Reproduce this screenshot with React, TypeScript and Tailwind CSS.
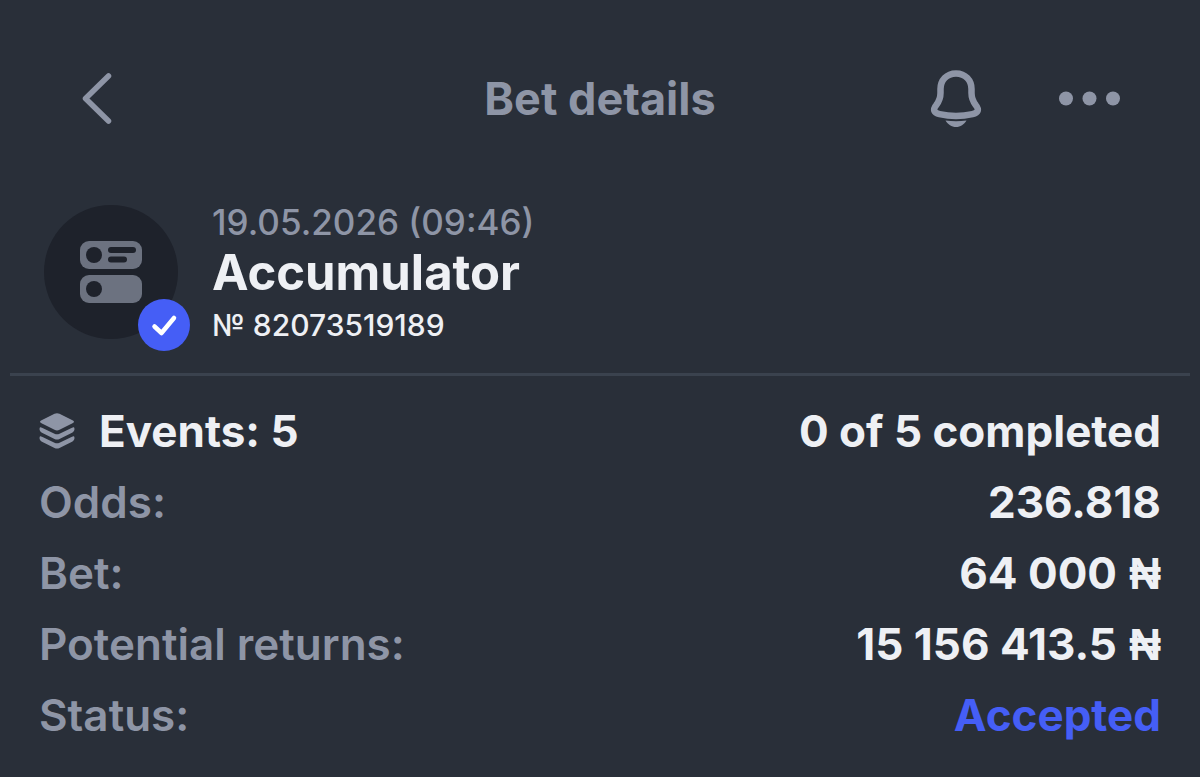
import { clsx } from 'clsx'

interface DetailRow {
  label: string
  value: string
  currency?: string
  accent?: boolean
}

const rows: DetailRow[] = [
  { label: 'Odds:', value: '236.818' },
  { label: 'Bet:', value: '64 000', currency: '₦' },
  { label: 'Potential returns:', value: '15 156 413.5', currency: '₦' },
  { label: 'Status:', value: 'Accepted', accent: true },
]

function BackIcon() {
  return (
    <svg className="w-8 h-14" viewBox="0 0 32 56" fill="none" stroke="currentColor" strokeWidth="5.500" strokeLinecap="round" strokeLinejoin="round" aria-hidden="true">
      <path d="M28.500 5 5.500 27.500 28.500 50" />
    </svg>
  )
}

function BellIcon() {
  return (
    <svg className="w-14 h-16" viewBox="0 0 56 64" fill="none" aria-hidden="true">
      <path
        d="M28 6.500C18.500 6.500 12.500 13.500 12.500 22V26C12.500 31.500 11.300 34 8.300 38C4.500 42.800 5.800 45.800 11.500 47.100C22 49.500 34 49.500 44.500 47.100C50.200 45.800 51.500 42.800 47.700 38C44.700 34 43.500 31.500 43.500 26V22C43.500 13.500 37.500 6.500 28 6.500Z"
        stroke="currentColor"
        strokeWidth="6.500"
        strokeLinejoin="round"
      />
      <path d="M17.500 53.500C24.500 54.500 31.500 54.500 38.500 53.500C36 57.500 32.500 60 28 60C23.500 60 20 57.500 17.500 53.500Z" fill="currentColor" />
    </svg>
  )
}

function DotsIcon() {
  return (
    <svg className="w-16 h-4" viewBox="0 0 64 16" fill="currentColor" aria-hidden="true">
      <circle cx="10" cy="7.500" r="7" />
      <circle cx="33.500" cy="7.500" r="7" />
      <circle cx="57" cy="7.500" r="7" />
    </svg>
  )
}

function AccumulatorIcon() {
  return (
    <svg className="w-16 h-16" viewBox="0 0 64 64" aria-hidden="true">
      <rect x="1" y="1" width="62" height="28" rx="9" fill="#6c7280" />
      <rect x="1" y="35" width="62" height="28" rx="9" fill="#6c7280" />
      <g fill="#1e222b">
        <circle cx="15" cy="15" r="8" />
        <circle cx="15" cy="49" r="8" />
        <rect x="29" y="7" width="28" height="6" rx="3" />
        <rect x="29" y="16.500" width="19" height="6" rx="3" />
      </g>
    </svg>
  )
}

function LayersIcon() {
  return (
    <svg className="w-9 h-10" viewBox="0 0 36 40" fill="#8e95a6" aria-hidden="true">
      <path d="M15.500 1.800Q18 .6 20.500 1.800L33.500 8.200Q36.500 9.700 33.500 11.200L20.500 17.800Q18 19 15.500 17.800L2.500 11.200Q-.5 9.700 2.500 8.200Z" />
      <path d="M1 15.200Q1.600 14.900 3.500 15.900L15.500 21.700Q18 22.800 20.500 21.700L32.500 15.900Q34.400 14.900 35 15.200Q36.500 18.700 33.500 20.500L20.500 27Q18 28.200 15.500 27L2.500 20.500Q-.5 18.700 1 15.200Z" />
      <path d="M1 24.200Q1.600 23.900 3.500 24.900L15.500 30.700Q18 31.800 20.500 30.700L32.500 24.900Q34.400 23.900 35 24.200Q36.500 27.700 33.500 29.500L20.500 36Q18 37.200 15.500 36L2.500 29.500Q-.5 27.700 1 24.200Z" />
    </svg>
  )
}

function Header() {
  return (
    <header className="grid grid-cols-[1fr_auto_1fr] items-center px-20 pt-[61px] text-[#8e95a6]">
      <button type="button" aria-label="Back" className="justify-self-start">
        <BackIcon />
      </button>
      <h1 className="text-[45px] leading-[76px] font-bold">Bet details</h1>
      <div className="flex items-center justify-end gap-18">
        <button type="button" aria-label="Notifications">
          <BellIcon />
        </button>
        <button type="button" aria-label="More">
          <DotsIcon />
        </button>
      </div>
    </header>
  )
}

function BetSummary() {
  return (
    <section className="flex items-start gap-[34px] mx-[10px] mt-[63px] pl-[34px] pb-6 border-b-3 border-[#3a424e]">
      <div className="relative shrink-0 flex items-center justify-center mt-[5px] w-[134px] h-[134px] rounded-full bg-[#1e222b]">
        <AccumulatorIcon />
        {/* Accepted badge */}
        <span className="absolute -right-3 -bottom-3 flex items-center justify-center w-[52px] h-[52px] rounded-full bg-[#455ef6]">
          <svg className="w-7 h-7" viewBox="0 0 28 28" fill="none" stroke="#fff" strokeWidth="4.500" strokeLinecap="round" strokeLinejoin="round" aria-hidden="true">
            <path d="M4.500 15.500 11.500 22 24 7" />
          </svg>
        </span>
      </div>
      <div>
        <p className="text-[35px] leading-[45px] font-medium text-[#8e95a6]">19.05.2026 (09:46)</p>
        <h2 className="text-[49px] leading-[56px] font-bold">Accumulator</h2>
        <p className="text-[30px] leading-[48px] font-medium">№ 82073519189</p>
      </div>
    </section>
  )
}

export default function App() {
  return (
    <main className="min-h-screen bg-[#292f39] text-[#eef0f4] font-[Inter,sans-serif]">
      <Header />
      <BetSummary />
      <dl className="px-[39px] pt-5 text-[44px] leading-[71px] font-bold">
        <div className="flex justify-between">
          <dt className="flex items-center gap-6">
            <LayersIcon />
            Events: 5
          </dt>
          <dd>0 of 5 completed</dd>
        </div>
        {rows.map((row) => (
          <div key={row.label} className="flex justify-between">
            <dt className="font-semibold text-[#8e95a6]">{row.label}</dt>
            <dd className={clsx(row.accent && 'text-[#455ef6]')}>
              {row.value}
              {row.currency && <span className="leading-none font-['Liberation_Sans',sans-serif]"> {row.currency}</span>}
            </dd>
          </div>
        ))}
      </dl>
    </main>
  )
}
